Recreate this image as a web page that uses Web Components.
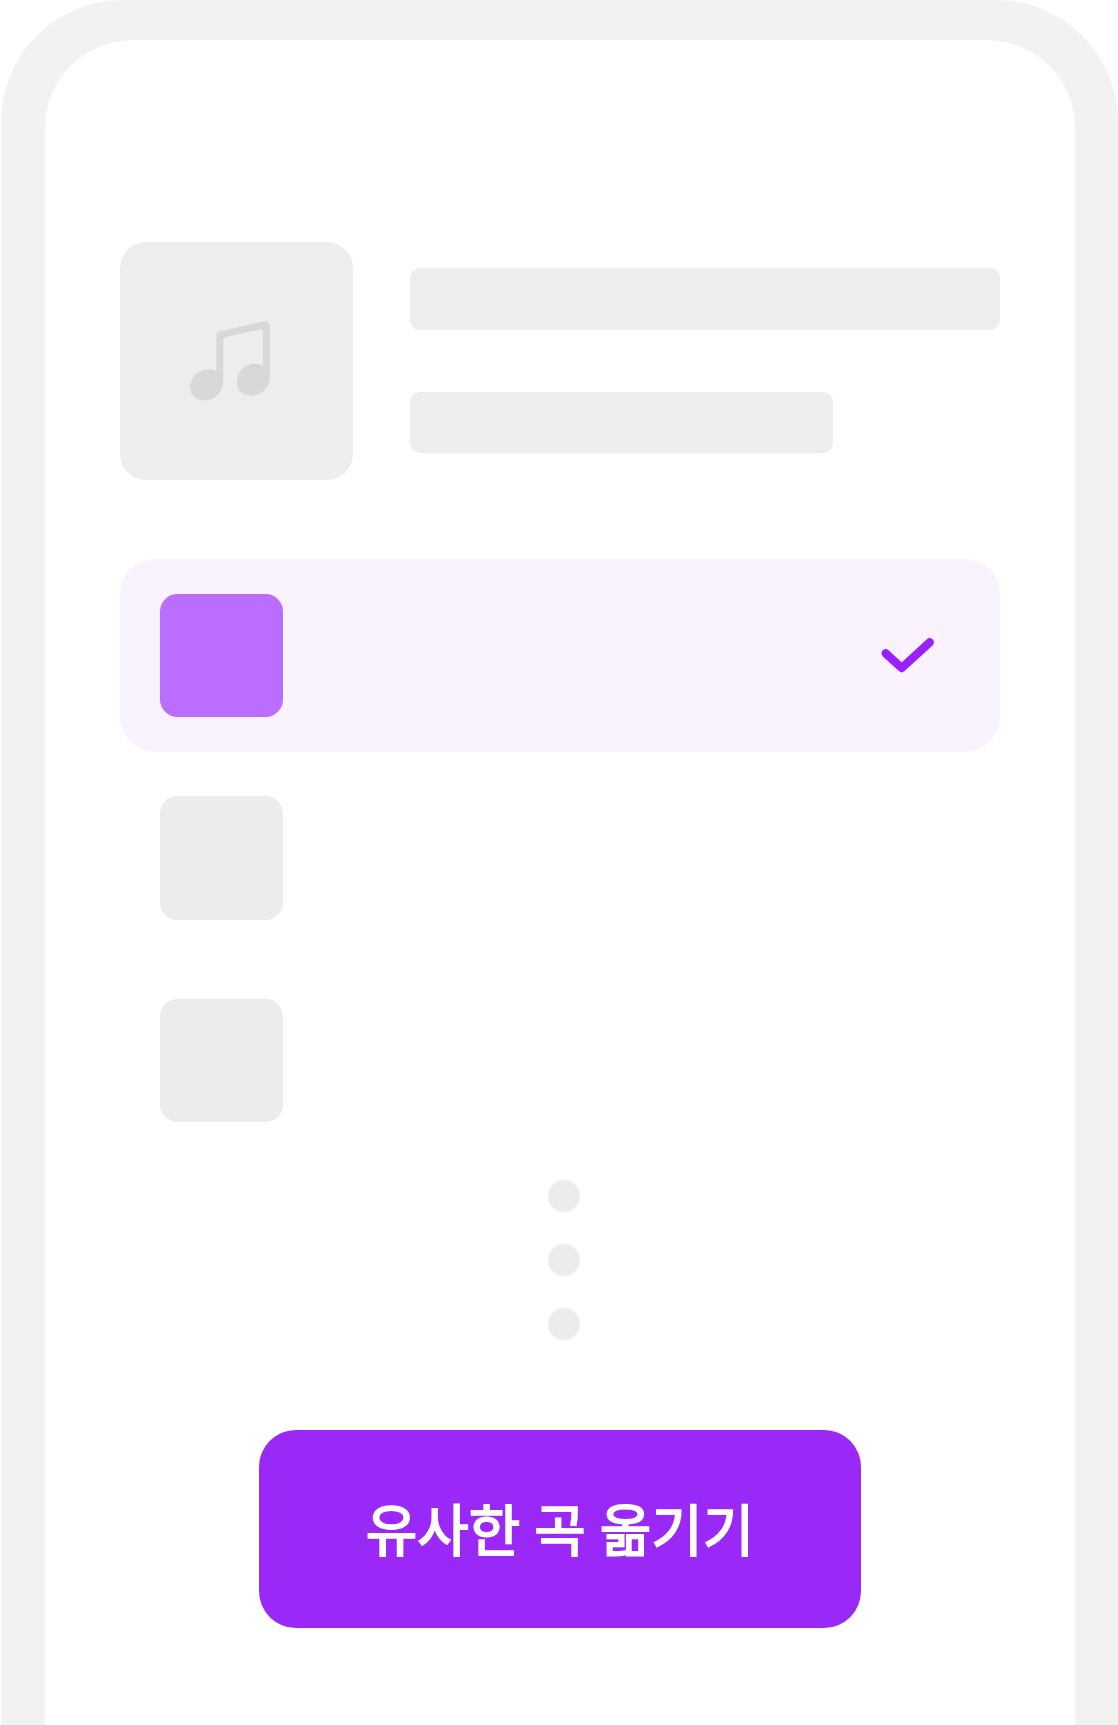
<!DOCTYPE html>
<html lang="ko">
<head>
<meta charset="utf-8">
<title>유사한 곡 옮기기</title>
<style>
html,body{margin:0;padding:0;background:#fff}
body{height:1725px;overflow:hidden}
</style>
</head>
<body>
<phone-frame>
  <track-header></track-header>
  <track-list>
    <track-row selected></track-row>
    <track-row></track-row>
    <track-row></track-row>
  </track-list>
  <more-dots></more-dots>
  <action-button>유사한 곡 옮기기</action-button>
</phone-frame>
<script>
function define(name, markup) {
  const template = document.createElement('template');
  template.innerHTML = markup;
  customElements.define(name, class extends HTMLElement {
    constructor() {
      super();
      this.attachShadow({ mode: 'open' }).append(template.content.cloneNode(true));
    }
  });
}

define('phone-frame', `
<style>
:host{display:block;box-sizing:border-box;height:1725px;margin-left:1px;padding:39.6px 43px 0 44px;background:#f2f2f2;border-radius:122px 122px 0 0}
.screen{box-sizing:border-box;height:100%;padding:202.4px 75px 0;background:#fff;border-radius:88px 88px 0 0;display:flex;flex-direction:column}
</style>
<div class="screen"><slot></slot></div>`);

define('track-header', `
<style>
:host{display:flex;gap:57.2px}
.cover{flex:none;box-sizing:border-box;width:233.2px;height:237.6px;padding-right:13px;border-radius:26.4px;background:#ededed;display:flex;align-items:center;justify-content:center}
svg{display:block;width:80px;height:80px;overflow:visible}
.lines{flex:1;padding-top:26.4px;display:flex;flex-direction:column;gap:61.6px}
.bar{height:61.6px;border-radius:10px;background:#ededed}
.short{width:422.4px}
</style>
<div class="cover"><svg viewBox="0 0 80 80"><path fill="#d8d8d8" d="M26.3 50.3V15C26.3 12.5 28 10.8 30.2 10.3L74 .3C77.2-.3 79.8 2 79.8 5V56.5C79.8 66.5 71.5 74.8 61.5 74.8C53 74.8 46.8 69 46.8 61C46.8 51 55 42.8 65 42.8C68 42.8 71 43.5 73 45V10.5C73 9 71.8 8.1 70.3 8.4L35.5 15.9C34 16.3 33.2 17.2 33.2 18.7V61C33.2 71 25 79.5 14.7 79.5C6 79.5 .2 73.8 .2 66C.2 56 8.5 48.4 18.5 48.4C21.5 48.4 24 49 26.3 50.3Z"/></svg></div>
<div class="lines"><div class="bar"></div><div class="bar short"></div></div>`);

define('track-list', `
<style>:host{display:flex;flex-direction:column;gap:8.8px;margin-top:79.2px}</style>
<slot></slot>`);

define('track-row', `
<style>
:host{box-sizing:border-box;height:193.6px;padding:0 66px 0 39.6px;border-radius:35.2px;display:flex;align-items:center;justify-content:space-between}
:host([selected]){background:#faf2ff}
.thumb{width:123.2px;height:123.2px;border-radius:17.6px;background:#ececec}
:host([selected]) .thumb{background:#bb6dff}
svg{display:none;width:53px;height:35px}
:host([selected]) svg{display:block}
</style>
<div class="thumb"></div>
<svg viewBox="0 0 53 35"><path d="M4.7 15.3L20.7 30L48.7 4.3" fill="none" stroke="#9b20ff" stroke-width="8.4" stroke-linecap="round" stroke-linejoin="round"/></svg>`);

define('more-dots', `
<style>
:host{display:flex;flex-direction:column;align-items:center;gap:32px;margin:22.8px 0 0 8px}
i{width:32px;height:32px;border-radius:50%;background:#ececec}
</style>
<i></i><i></i><i></i>`);

define('action-button', `
<style>
:host{display:block;align-self:center;margin-top:90px}
button{display:flex;align-items:center;justify-content:center;box-sizing:border-box;width:602px;height:198px;padding:0 0 4px;border:0;border-radius:37px;background:#9a28f7;color:#fff;font:400 56px/80px "Noto Sans CJK KR",sans-serif;word-spacing:-1.7px;-webkit-text-stroke:1.8px #fff;white-space:nowrap}
</style>
<button type="button"><slot></slot></button>`);
</script>
</body>
</html>
